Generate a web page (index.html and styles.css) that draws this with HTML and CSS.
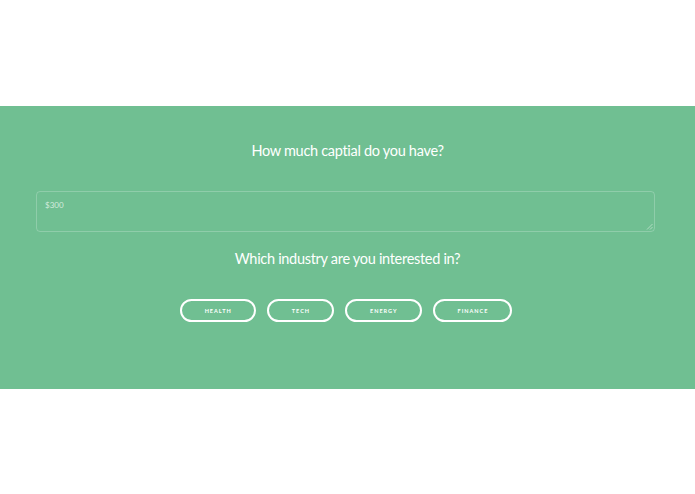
FILE: index.html
```html
<!DOCTYPE html>
<html>
<head>
<meta charset="utf-8">
<link rel="stylesheet" href="styles.css">
</head>
<body>
<div class="top"></div>
<section class="panel">
  <h2 class="question q1">How much captial do you have?</h2>
  <div class="field">
    <textarea class="capital" placeholder="$300"></textarea>
    <svg class="grip" width="7" height="7" viewBox="0 0 7 7"><path d="M6.5 1 L1 6.5 M6.5 4 L4 6.5" stroke="rgba(255,255,255,0.45)" stroke-width="1" fill="none"/></svg>
  </div>
  <h2 class="question q2">Which industry are you interested in?</h2>
  <div class="choices">
    <button class="pill">HEALTH</button>
    <button class="pill">TECH</button>
    <button class="pill">ENERGY</button>
    <button class="pill">FINANCE</button>
  </div>
</section>
</body>
</html>
```
FILE: styles.css
```css
html, body {
  margin: 0;
  padding: 0;
  background: #ffffff;
}
body {
  font-family: Lato, "Liberation Sans", sans-serif;
}
.top {
  height: 106px;
}
.panel {
  background: #70bf92;
  height: 283px;
  box-sizing: border-box;
  padding-top: 34px;
}
.question {
  margin: 0;
  text-align: center;
  color: #ffffff;
  font-weight: 400;
  font-size: 14.5px;
  letter-spacing: -0.3px;
  line-height: 22px;
}
.field {
  position: relative;
  margin: 29px 40px 0 36px;
}
.capital {
  display: block;
  width: 100%;
  height: 41px;
  box-sizing: border-box;
  background: transparent;
  border: 1px solid rgba(255,255,255,0.22);
  border-radius: 4px;
  padding: 8px 8px;
  font-family: Lato, "Liberation Sans", sans-serif;
  font-size: 8px;
  color: #ffffff;
  resize: none;
  outline: none;
}
.capital::placeholder {
  color: rgba(255,255,255,0.7);
}
.grip {
  position: absolute;
  right: 2px;
  bottom: 2px;
}
.q2 {
  margin-top: 16px;
}
.choices {
  display: flex;
  justify-content: center;
  gap: 11px;
  margin-top: 29px;
  padding-right: 3px;
}
.pill {
  height: 23px;
  box-sizing: border-box;
  border: 2px solid #ffffff;
  border-radius: 12px;
  background: transparent;
  color: #ffffff;
  font-family: Lato, "Liberation Sans", sans-serif;
  font-weight: 700;
  font-size: 5.5px;
  letter-spacing: 1px;
  padding: 0 22px 0 23px;
  cursor: pointer;
}
```
